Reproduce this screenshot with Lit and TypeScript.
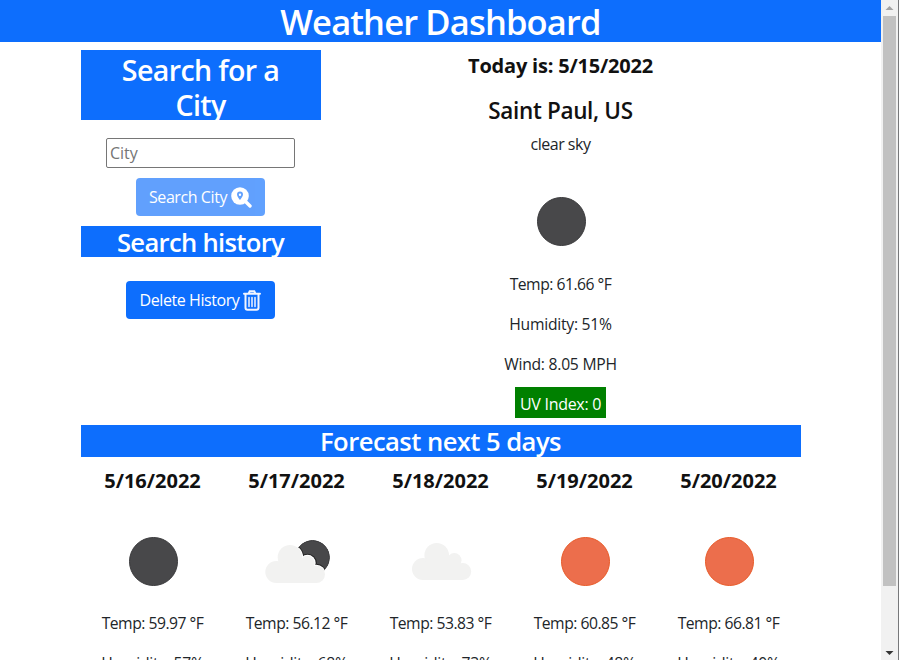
import { LitElement, html, css, svg } from "lit";
import { customElement, property } from "lit/decorators.js";

type Sky = "moon" | "sun" | "cloud" | "cloudmoon";

@customElement("weather-icon")
class WeatherIcon extends LitElement {
  @property() kind: Sky = "moon";
  static styles = css`
    :host { display: block; width: 100px; height: 100px; }
    svg { display: block; }
  `;
  render() {
    const shapes = {
      moon: svg`<circle cx="51" cy="50.500" r="24" fill="#48484a" stroke="#3a3a3c"/>`,
      sun: svg`<circle cx="51" cy="50.500" r="24" fill="#ec6e4c" stroke="#e85a28"/>`,
      cloud: svg`<g fill="#f2f2f1">
        <circle cx="46.200" cy="44.300" r="12.300"/><circle cx="32.500" cy="58" r="11"/>
        <circle cx="63.800" cy="49.300" r="7.200"/><circle cx="72.200" cy="60.500" r="8.500"/>
        <path d="M32.500 69V52L46 45l18 4 8 6v14z"/></g>`,
      cloudmoon: svg`
        <clipPath id="disc"><circle cx="66" cy="46.500" r="17.400"/></clipPath>
        <g clip-path="url(#disc)">
          <circle cx="66" cy="46.500" r="17" fill="#48484a" stroke="#333335"/>
          <g fill="#222"><circle cx="61" cy="52" r="9.300"/><circle cx="69.800" cy="63.300" r="10.500"/><circle cx="43.500" cy="46.300" r="14"/></g>
          <g fill="#fff"><circle cx="61" cy="52" r="8.200"/><circle cx="69.800" cy="63.300" r="9.500"/><circle cx="43.500" cy="46.300" r="13.100"/></g>
        </g>
        <g fill="#f2f2f1"><circle cx="43.500" cy="46.300" r="12.300"/><circle cx="29.800" cy="61" r="11"/>
        <circle cx="61" cy="52" r="7.200"/><circle cx="69.800" cy="63.300" r="8.700"/>
        <path d="M29.800 72V55L43 47l18 5 9 6v14z"/></g>`,
    };
    return html`<svg width="100" height="100" viewBox="0.5 0 100 100">${shapes[this.kind]}</svg>`;
  }
}

@customElement("app-root")
class AppRoot extends LitElement {
  days: { date: string; icon: Sky; temp: string; humidity: string }[] = [
    { date: "5/16/2022", icon: "moon", temp: "59.97", humidity: "57" },
    { date: "5/17/2022", icon: "cloudmoon", temp: "56.12", humidity: "68" },
    { date: "5/18/2022", icon: "cloud", temp: "53.83", humidity: "73" },
    { date: "5/19/2022", icon: "sun", temp: "60.85", humidity: "48" },
    { date: "5/20/2022", icon: "sun", temp: "66.81", humidity: "40" },
  ];

  static styles = css`
    :host { display: flex; width: 899px; height: 660px; overflow: hidden; background: #fff; color: #212529;
      font: 16px/24px "Open Sans", "Noto Sans", sans-serif; }
    * { box-sizing: border-box; }
    h1, h2, h3, h4, p { margin: 0; font-weight: 600; text-align: center; white-space: nowrap; }
    .page { width: 881px; height: 660px; overflow: hidden; flex: none; }
    h1 { height: 42px; background: #0d6efd; color: #fff; font-size: 34.5px; line-height: 43px; letter-spacing: -.85px; }
    .container { width: 720px; margin: 8px 0 0 80.5px; }
    .row { display: flex; height: 375px; }
    .side { width: 240px; display: flex; flex-direction: column; align-items: center; }
    .today { width: 480px; display: flex; flex-direction: column; align-items: center; }
    h2 { width: 100%; background: #0d6efd; color: #fff; overflow: hidden; }
    .find { height: 70px; font-size: 28.6px; line-height: 35px; padding-top: 2px; letter-spacing: -.65px; }
    .history { height: 31px; margin-top: 10px; font-size: 25.6px; line-height: 34px; letter-spacing: -.68px; }
    .forecast { height: 32px; font-size: 25.6px; line-height: 34px; letter-spacing: -.55px; }
    input { width: 189px; height: 30px; margin-top: 18px; padding: 1px 3px; border: 1px solid #767676; border-radius: 2px; font: inherit; }
    input::placeholder { color: #757575; }
    button { display: flex; align-items: center; justify-content: center; gap: 4px; height: 38px; padding: 0; border: 0; border-radius: 4px;
      background: #0d6efd; color: #fff; font: inherit; letter-spacing: -.42px; white-space: nowrap; }
    .search { width: 129px; margin-top: 10px; opacity: .65; }
    .delete { width: 149px; margin-top: 24px; }
    h3 { color: #111; font-size: 20px; line-height: 24px; font-weight: 700; }
    .date { margin-top: 4px; letter-spacing: -.2px; }
    h4 { margin-top: 19px; font-size: 22.5px; line-height: 28px; color: #111; letter-spacing: -.35px; }
    .sky { margin: 7px 0 15px; letter-spacing: -.5px; }
    .today weather-icon { margin-bottom: 1px; }
    .stat { margin-bottom: 16px; font-size: 15.7px; letter-spacing: -.25px; }
    .temp { letter-spacing: -.5px; }
    .uv { width: 91px; height: 31px; margin-top: -5px; font-weight: 400; line-height: 34px; letter-spacing: -.3px; background: #008000; color: #fff; }
    .days { display: grid; grid-template-columns: repeat(5, 144px); }
    .day { display: flex; flex-direction: column; align-items: center; }
    .day h3 { margin: 12px 0 18px; }
    .bar { width: 17px; height: 660px; flex: none; background: #f1f1f1; display: flex; flex-direction: column; align-items: center; }
    .thumb { width: 13px; height: 570px; background: #c1c1c1; }
    .edge { width: 1px; height: 660px; background: #77787a; }
  `;

  render() {
    return html`
      <div class="page">
        <h1>Weather Dashboard</h1>
        <div class="container">
          <div class="row">
            <div class="side">
              <h2 class="find">Search for a<br />City</h2>
              <input placeholder="City" />
              <button class="search"><span>Search City</span>
                <svg width="21" height="21" viewBox="0 0 21 21"><circle cx="9" cy="9" r="8.800" fill="#fff"/><path d="M13.500 13.500l5.500 5.500" stroke="#fff" stroke-width="3.400" stroke-linecap="round"/><path fill="#0d6efd" fill-rule="evenodd" d="M9 4.600a3 3 0 0 1 3 3c0 1.900-3 5.500-3 5.500s-3-3.600-3-5.500a3 3 0 0 1 3-3zm0 1.900a1.200 1.200 0 1 0 0 2.400a1.200 1.200 0 0 0 0-2.400z"/></svg>
              </button>
              <h2 class="history">Search history</h2>
              <button class="delete"><span>Delete History</span>
                <svg width="18" height="21" viewBox="0 0 18 21" fill="none" stroke="#f2f5ff" stroke-width="2" stroke-linecap="round"><path d="M1 3.800h16M5.700 3.500l1-2.300h4.600l1 2.300M2.500 4v13.800a2 2 0 0 0 2 2h9a2 2 0 0 0 2-2V4"/><path d="M6 7.500v9M9 7.500v9M12 7.500v9" stroke-width="1.500"/></svg>
              </button>
            </div>
            <div class="today">
              <h3 class="date">Today is: 5/15/2022</h3>
              <h4>Saint Paul, US</h4>
              <div class="sky">clear sky</div>
              <weather-icon kind="moon"></weather-icon>
              <div class="stat temp">Temp: 61.66 °F</div>
              <div class="stat">Humidity: 51%</div>
              <div class="stat">Wind: 8.05 MPH</div>
              <p class="uv">UV Index: 0</p>
            </div>
          </div>
          <h2 class="forecast">Forecast next 5 days</h2>
          <div class="days">
            ${this.days.map((d) => html`<div class="day">
              <h3>${d.date}</h3>
              <weather-icon .kind=${d.icon}></weather-icon>
              <div class="stat temp">Temp: ${d.temp} °F</div>
              <div class="stat">Humidity: ${d.humidity}%</div>
            </div>`)}
          </div>
        </div>
      </div>
      <div class="bar">
        <svg width="17" height="16" viewBox="0 0 17 16"><path d="M4.500 10l4-4 4 4z" fill="#a3a3a3"/></svg>
        <div class="thumb"></div>
        <svg width="17" height="74" viewBox="0 0 17 74"><path d="M4.500 65h8l-4 4z" fill="#333"/></svg>
      </div>
      <div class="edge"></div>
    `;
  }
}
